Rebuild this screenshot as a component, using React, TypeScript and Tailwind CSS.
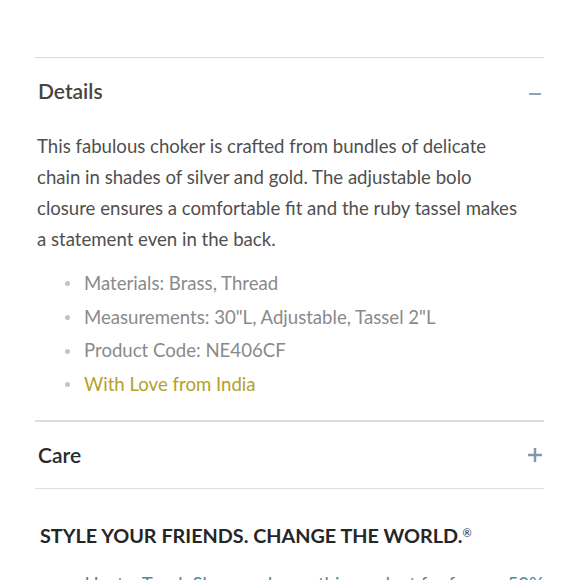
import React from "react";

const font = { fontFamily: "Lato, 'Noto Sans', sans-serif" };

export default function App() {
  return (
    <div className="w-[580px] h-[580px] overflow-hidden bg-white" style={font}>
      <div className="pl-[35px] pr-[36px] pt-[57px]">
        <div className="border-t border-[#dcdcdc]">
          <div className="flex h-[66px] items-center justify-between pl-[3px] pr-[3px]">
            <span className="text-[21px] font-semibold text-[#454545]">Details</span>
            <span className="mt-[6px] block h-[2px] w-[12px] bg-[#8fa3b0]" />
          </div>
          <p className="mt-[7px] w-[492px] pl-[2px] text-[18.6px] leading-[31px] text-[#4f4f4f]">
            This fabulous choker is crafted from bundles of delicate chain in shades of silver and gold. The adjustable bolo closure ensures a comfortable fit and the ruby tassel makes a statement even in the back.
          </p>
          <ul className="mt-[12px] pl-[30px] text-[18.6px] leading-[33.7px] text-[#8a8a8a]">
            {[
              ["Materials: Brass, Thread", false],
              ['Measurements: 30"L, Adjustable, Tassel 2"L', false],
              ["Product Code: NE406CF", false],
              ["With Love from India", true],
            ].map(([t, gold], i) => (
              <li key={i} className="flex items-center">
                <span className="mr-[14px] h-[5px] w-[5px] rounded-full bg-[#c4c4c4]" />
                <span className={gold ? "text-[#b5a02b]" : ""}>{t as string}</span>
              </li>
            ))}
          </ul>
        </div>
        <div className="mt-[18px] border-t-2 border-[#dedede]">
          <div className="flex h-[66px] items-center justify-between pl-[3px] pr-[3px]">
            <span className="text-[21px] font-semibold text-[#2a2a2a]">Care</span>
            <svg width="14" height="14" viewBox="0 0 14 14" className="mr-[-1px]">
              <rect x="5.75" y="0" width="2.5" height="14" fill="#8299a7" />
              <rect x="0" y="5.75" width="14" height="2.5" fill="#8299a7" />
            </svg>
          </div>
        </div>
        <div className="border-t border-[#dedede]">
          <div className="mt-[32px] pl-[5px] text-[19.8px] font-bold text-[#262626]">
            STYLE YOUR FRIENDS. CHANGE THE WORLD.<sup className="text-[11px] font-normal">®</sup>
          </div>
          <ul className="mt-[18px] pl-[30px] text-[18.6px] leading-[30px] text-[#4b8aa3]">
            <li className="flex items-center">
              <span className="mr-[15px] h-[5px] w-[5px] rounded-full bg-[#c4c4c4]" />
              <span className="whitespace-nowrap">Host a Trunk Show and earn this product for free or 50%</span>
            </li>
          </ul>
        </div>
      </div>
    </div>
  );
}
